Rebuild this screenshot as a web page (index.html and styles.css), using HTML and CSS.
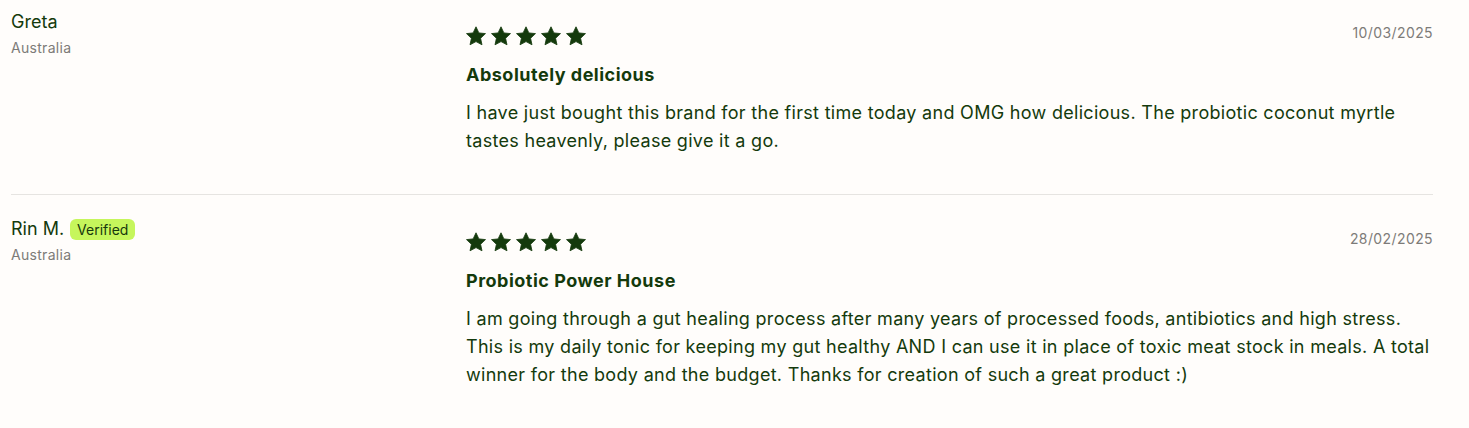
FILE: index.html
```html
<!DOCTYPE html>
<html lang="en">
<head>
<meta charset="utf-8">
<title>Reviews</title>
<link rel="stylesheet" href="styles.css">
</head>
<body>
<div class="reviews">
  <div class="review">
    <div class="author">
      <div class="name">Greta</div>
      <div class="country">Australia</div>
    </div>
    <div class="content">
      <div class="head">
        <div class="stars">
          <svg viewBox="0 0 20 20"><path d="M10 0.8L12.9 6.9 19.5 7.6 14.6 12.3 16 18.8 10 15.6 4 18.8 5.4 12.3 0.5 7.6 7.1 6.9z"/></svg>
          <svg viewBox="0 0 20 20"><path d="M10 0.8L12.9 6.9 19.5 7.6 14.6 12.3 16 18.8 10 15.6 4 18.8 5.4 12.3 0.5 7.6 7.1 6.9z"/></svg>
          <svg viewBox="0 0 20 20"><path d="M10 0.8L12.9 6.9 19.5 7.6 14.6 12.3 16 18.8 10 15.6 4 18.8 5.4 12.3 0.5 7.6 7.1 6.9z"/></svg>
          <svg viewBox="0 0 20 20"><path d="M10 0.8L12.9 6.9 19.5 7.6 14.6 12.3 16 18.8 10 15.6 4 18.8 5.4 12.3 0.5 7.6 7.1 6.9z"/></svg>
          <svg viewBox="0 0 20 20"><path d="M10 0.8L12.9 6.9 19.5 7.6 14.6 12.3 16 18.8 10 15.6 4 18.8 5.4 12.3 0.5 7.6 7.1 6.9z"/></svg>
        </div>
        <div class="date">10/03/2025</div>
      </div>
      <h3 class="title">Absolutely delicious</h3>
      <p class="body">I have just bought this brand for the first time today and OMG how delicious. The probiotic coconut myrtle tastes heavenly, please give it a go.</p>
    </div>
  </div>
  <div class="review">
    <div class="author">
      <div class="name">Rin M. <span class="badge">Verified</span></div>
      <div class="country">Australia</div>
    </div>
    <div class="content">
      <div class="head">
        <div class="stars">
          <svg viewBox="0 0 20 20"><path d="M10 0.8L12.9 6.9 19.5 7.6 14.6 12.3 16 18.8 10 15.6 4 18.8 5.4 12.3 0.5 7.6 7.1 6.9z"/></svg>
          <svg viewBox="0 0 20 20"><path d="M10 0.8L12.9 6.9 19.5 7.6 14.6 12.3 16 18.8 10 15.6 4 18.8 5.4 12.3 0.5 7.6 7.1 6.9z"/></svg>
          <svg viewBox="0 0 20 20"><path d="M10 0.8L12.9 6.9 19.5 7.6 14.6 12.3 16 18.8 10 15.6 4 18.8 5.4 12.3 0.5 7.6 7.1 6.9z"/></svg>
          <svg viewBox="0 0 20 20"><path d="M10 0.8L12.9 6.9 19.5 7.6 14.6 12.3 16 18.8 10 15.6 4 18.8 5.4 12.3 0.5 7.6 7.1 6.9z"/></svg>
          <svg viewBox="0 0 20 20"><path d="M10 0.8L12.9 6.9 19.5 7.6 14.6 12.3 16 18.8 10 15.6 4 18.8 5.4 12.3 0.5 7.6 7.1 6.9z"/></svg>
        </div>
        <div class="date">28/02/2025</div>
      </div>
      <h3 class="title">Probiotic Power House</h3>
      <p class="body">I am going through a gut healing process after many years of processed foods, antibiotics and high stress. This is my daily tonic for keeping my gut healthy AND I can use it in place of toxic meat stock in meals. A total winner for the body and the budget. Thanks for creation of such a great product :)</p>
    </div>
  </div>
</div>
</body>
</html>
```

FILE: styles.css
```css
html, body {
  margin: 0;
  padding: 0;
  background: #fffdfb;
}
body {
  font-family: Inter, "Liberation Sans", Arial, sans-serif;
  color: #143a0c;
}
.reviews {
  width: 1422px;
  padding-left: 11px;
}
.review {
  display: grid;
  grid-template-columns: 455px 1fr;
  padding: 22px 0 39px;
  border-bottom: 1px solid #e6e4e1;
}
.review:first-child {
  padding-top: 11px;
}
.author {
  padding-top: 1px;
}
.review:first-child .author {
  padding-top: 0;
}
.name {
  font-size: 18px;
  line-height: 22px;
  display: flex;
  align-items: center;
  gap: 6px;
}
.badge {
  background: #c6f65c;
  color: #17380d;
  font-size: 14px;
  line-height: 21px;
  padding: 0 7px;
  border-radius: 6px;
}
.country {
  font-size: 14px;
  line-height: 20px;
  color: #7d7b78;
  margin-top: 5px;
  letter-spacing: 0.3px;
}
.content {
  padding-top: 16px;
}
.head {
  display: flex;
  justify-content: space-between;
  align-items: flex-start;
}
.stars {
  display: flex;
  gap: 5px;
  height: 19px;
}
.stars svg {
  width: 20px;
  height: 20px;
  fill: #143a0c;
  stroke: #143a0c;
  stroke-width: 0.8;
  stroke-linejoin: round;
  margin-top: -1px;
}
.date {
  font-size: 14px;
  line-height: 18px;
  color: #7d7b78;
  margin-top: -3px;
  letter-spacing: 0.4px;
}
.title {
  margin: 17px 0 0;
  font-size: 18px;
  line-height: 24px;
  font-weight: 700;
  letter-spacing: 0.5px;
}
.body {
  margin: 12px 0 0;
  font-size: 18px;
  line-height: 28px;
  letter-spacing: 0.3px;
}
```
